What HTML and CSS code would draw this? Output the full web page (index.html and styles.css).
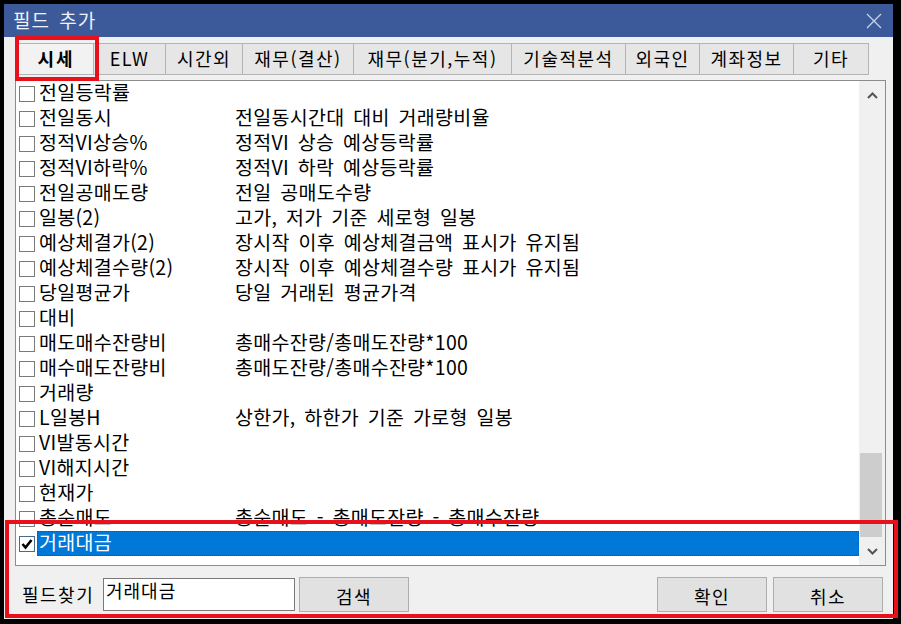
FILE: index.html
```html
<!DOCTYPE html>
<html lang="ko">
<head>
	<meta charset="utf-8">
	<title>필드 추가</title>
	<link rel="stylesheet" href="styles.css">
</head>
<body>
	<div class="window">
		<div class="titlebar">
			<span class="title">필드 추가</span>
			<svg class="close" width="16" height="16" viewBox="0 0 16 16"><path d="M1 1 L15 15 M15 1 L1 15" stroke="#c9d3e8" stroke-width="1.3" fill="none"/></svg>
		</div>
		<div class="body">
			<div class="tabs">
				<div class="tab selected" style="width:76px">시세</div>
				<div class="tab" style="width:72px">ELW</div>
				<div class="tab" style="width:77px">시간외</div>
				<div class="tab" style="width:111px">재무(결산)</div>
				<div class="tab" style="width:158px">재무(분기,누적)</div>
				<div class="tab" style="width:114px">기술적분석</div>
				<div class="tab" style="width:74px">외국인</div>
				<div class="tab" style="width:94px">계좌정보</div>
				<div class="tab" style="width:75px">기타</div>
			</div>

			<div class="listbox">
				<div class="rows">
					<div class="row"><span class="box"></span><div class="cell"><span class="name">전일등락률</span><span class="desc"></span></div></div>
					<div class="row"><span class="box"></span><div class="cell"><span class="name">전일동시</span><span class="desc">전일동시간대 대비 거래량비율</span></div></div>
					<div class="row"><span class="box"></span><div class="cell"><span class="name">정적VI상승%</span><span class="desc">정적VI 상승 예상등락률</span></div></div>
					<div class="row"><span class="box"></span><div class="cell"><span class="name">정적VI하락%</span><span class="desc">정적VI 하락 예상등락률</span></div></div>
					<div class="row"><span class="box"></span><div class="cell"><span class="name">전일공매도량</span><span class="desc">전일 공매도수량</span></div></div>
					<div class="row"><span class="box"></span><div class="cell"><span class="name">일봉(2)</span><span class="desc">고가, 저가 기준 세로형 일봉</span></div></div>
					<div class="row"><span class="box"></span><div class="cell"><span class="name">예상체결가(2)</span><span class="desc">장시작 이후 예상체결금액 표시가 유지됨</span></div></div>
					<div class="row"><span class="box"></span><div class="cell"><span class="name">예상체결수량(2)</span><span class="desc">장시작 이후 예상체결수량 표시가 유지됨</span></div></div>
					<div class="row"><span class="box"></span><div class="cell"><span class="name">당일평균가</span><span class="desc">당일 거래된 평균가격</span></div></div>
					<div class="row"><span class="box"></span><div class="cell"><span class="name">대비</span><span class="desc"></span></div></div>
					<div class="row"><span class="box"></span><div class="cell"><span class="name">매도매수잔량비</span><span class="desc">총매수잔량/총매도잔량*100</span></div></div>
					<div class="row"><span class="box"></span><div class="cell"><span class="name">매수매도잔량비</span><span class="desc">총매도잔량/총매수잔량*100</span></div></div>
					<div class="row"><span class="box"></span><div class="cell"><span class="name">거래량</span><span class="desc"></span></div></div>
					<div class="row"><span class="box"></span><div class="cell"><span class="name">L일봉H</span><span class="desc">상한가, 하한가 기준 가로형 일봉</span></div></div>
					<div class="row"><span class="box"></span><div class="cell"><span class="name">VI발동시간</span><span class="desc"></span></div></div>
					<div class="row"><span class="box"></span><div class="cell"><span class="name">VI해지시간</span><span class="desc"></span></div></div>
					<div class="row"><span class="box"></span><div class="cell"><span class="name">현재가</span><span class="desc"></span></div></div>
					<div class="row"><span class="box"></span><div class="cell"><span class="name">총순매도</span><span class="desc">총순매도 - 총매도잔량 - 총매수잔량</span></div></div>
					<div class="row"><span class="box checked"><svg width="14" height="14" viewBox="0 0 14 14"><path d="M2.5 7 L5.5 10.5 L11.5 3" stroke="#000" stroke-width="2.6" fill="none"/></svg></span><div class="cell selected"><span class="name">거래대금</span><span class="desc"></span></div></div>
				</div>
				<div class="scrollbar">
					<div class="arrow"><svg width="11" height="7" viewBox="0 0 11 7"><path d="M1 6 L5.5 1.5 L10 6" stroke="#555" stroke-width="2" fill="none"/></svg></div>
					<div class="track"><div class="thumb"></div></div>
					<div class="arrow"><svg width="11" height="7" viewBox="0 0 11 7"><path d="M1 1 L5.5 5.5 L10 1" stroke="#555" stroke-width="2" fill="none"/></svg></div>
				</div>
			</div>

			<div class="search-row">
				<span class="label">필드찾기</span>
				<div class="field">거래대금</div>
				<button class="btn">검색</button>
				<button class="btn ok">확인</button>
				<button class="btn">취소</button>
			</div>
		</div>
	</div>

	<div class="mark mark-tab"></div>
	<div class="mark mark-bottom"></div>
</body>
</html>
```

FILE: styles.css
```css
html, body { margin: 0; padding: 0; }

body {
  background: #000;
  width: 901px;
  height: 624px;
  overflow: hidden;
  position: relative;
  font-family: "Noto Sans CJK KR", "Noto Sans", sans-serif;
  font-size: 18px;
  color: #000;
}

.window {
  margin: 4px 8px 0 4px;
  height: 615px;
  background: #f0f0f0;
  display: flex;
  flex-direction: column;
}

.titlebar {
  height: 33px;
  background: #3c5a99;
  display: flex;
  align-items: center;
  justify-content: space-between;
  padding: 0 11px 0 9px;
}

.title {
  color: #eef2fa;
  font-size: 19px;
  line-height: 1;
  letter-spacing: 1px;
  word-spacing: 3px;
  padding-bottom: 2px;
}

.body {
  flex: 1;
  padding: 6px 7px 0 11px;
  display: flex;
  flex-direction: column;
}

/* tabs */
.tabs {
  display: flex;
  height: 32px;
  margin-left: 3px;
}

.tab {
  box-sizing: border-box;
  height: 32px;
  background: #e6e6e6;
  border: 1px solid #b4b4b4;
  border-left: none;
  display: flex;
  align-items: center;
  justify-content: center;
  line-height: 1;
  letter-spacing: 1.5px;
  padding-bottom: 2px;
}

.tab:first-child { border-left: 1px solid #b4b4b4; }

.tab.selected { background: #f2f2f2; font-weight: 700; letter-spacing: 2px; }

/* list */
.listbox {
  margin-top: 5px;
  height: 486px;
  box-sizing: border-box;
  border: 1px solid #8c8c8c;
  background: #fff;
  display: flex;
}

.rows { flex: 1; }

.row {
  height: 25px;
  display: flex;
  align-items: center;
  padding-left: 3px;
}

.box {
  box-sizing: border-box;
  width: 16px;
  height: 16px;
  border: 1px solid #7a7a7a;
  background: #fff;
  flex: none;
  display: flex;
  align-items: center;
  justify-content: center;
}

.box.checked { border-color: #4a6a8a; }

.cell {
  box-sizing: border-box;
  flex: 1;
  height: 25px;
  margin-left: 2px;
  padding: 0 0 4px 1px;
  display: flex;
  align-items: center;
  line-height: 1;
  font-size: 19.5px;
  letter-spacing: 0.3px;
  white-space: nowrap;
  border: 1px solid transparent;
}

.cell.selected {
  background: #0078d7;
  color: #fff;
  border: 1px dotted #2a4f77;
}

.name { width: 196px; flex: none; }

.desc { word-spacing: 3px; }

.scrollbar {
  width: 26px;
  background: #f0f0f0;
  display: flex;
  flex-direction: column;
}

.arrow {
  height: 28px;
  display: flex;
  align-items: center;
  justify-content: center;
}

.track {
  flex: 1;
  display: flex;
  flex-direction: column;
  justify-content: flex-end;
}

.thumb {
  height: 84px;
  margin: 0 3px 0 1px;
  background: #cdcdcd;
}

/* bottom */
.search-row {
  margin-top: 11px;
  height: 35px;
  display: flex;
  align-items: center;
}

.label {
  width: 81px;
  margin-left: 7px;
  line-height: 1;
  letter-spacing: 1.5px;
  padding-bottom: 2px;
}

.field {
  box-sizing: border-box;
  width: 192px;
  height: 33px;
  border: 1px solid #7a7a7a;
  background: #fff;
  padding: 2px 0 0 2px;
  line-height: 1;
  letter-spacing: 1px;
}

.btn {
  box-sizing: border-box;
  width: 110px;
  height: 35px;
  margin-left: 4px;
  background: #e1e1e1;
  border: 1px solid #adadad;
  font-family: inherit;
  font-size: 18px;
  letter-spacing: 1.5px;
  padding: 2px 0 0;
  color: #000;
}

.btn.ok { margin-left: auto; }

.btn:last-child { margin-left: 6px; margin-right: 3px; }

/* annotation marks */
.mark {
  position: absolute;
  box-sizing: border-box;
  border: 4px solid #e8101a;
}

.mark-tab { left: 15px; top: 36px; width: 84px; height: 45px; }

.mark-bottom { left: 5px; top: 520px; width: 893px; height: 98px; }
```
